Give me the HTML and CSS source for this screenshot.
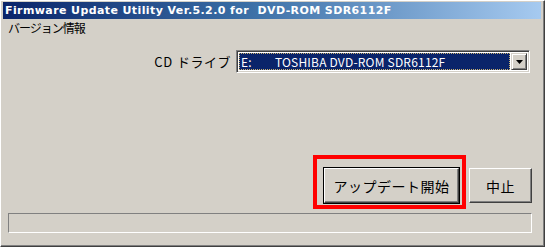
FILE: index.html
```html
<!DOCTYPE html>
<html lang="ja">
<head>
<meta charset="utf-8">
<link rel="stylesheet" href="styles.css">
</head>
<body>
<div class="window">
  <div class="titlebar">Firmware Update Utility Ver.5.2.0 for&nbsp; DVD-ROM SDR6112F</div>
  <div class="menubar"><span class="menu-item">バージョン情報</span></div>
  <div class="content">
    <div class="drive-row">
      <span class="drive-label">CD ドライブ</span>
      <div class="combo">
        <div class="combo-value"><span class="combo-text">E:        TOSHIBA DVD-ROM SDR6112F</span></div>
        <div class="combo-button">
          <svg width="7" height="4" viewBox="0 0 7 4"><path d="M0 0H7L3.5 4Z" fill="#000"/></svg>
        </div>
      </div>
    </div>
    <div class="button-row">
      <div class="btn btn-default">アップデート開始</div>
      <div class="btn btn-cancel">中止</div>
      <div class="highlight"></div>
    </div>
    <div class="progress"></div>
  </div>
</div>
</body>
</html>
```

FILE: styles.css
```css
html, body {
  margin: 0;
  padding: 0;
  background: #d4d0c8;
}
.window {
  position: relative;
  width: 545px;
  height: 247px;
  box-sizing: border-box;
  background: #d4d0c8;
  border-top: 1px solid #ffffff;
  border-left: 1px solid #ffffff;
  border-right: 1px solid #404040;
  border-bottom: 1px solid #404040;
  box-shadow: inset -1px -1px 0 #808080;
  padding: 1px 3px 2px 2px;
  font-family: "Noto Sans CJK JP", "DejaVu Sans", sans-serif;
  color: #000;
}
.titlebar {
  height: 17px;
  background: linear-gradient(to right, #0a246a 0%, #3a6ea5 45%, #a6caf0 100%);
  color: #fff;
  font-family: "DejaVu Sans", sans-serif;
  font-weight: bold;
  font-size: 11px;
  line-height: 17px;
  padding-left: 2px;
  white-space: nowrap;
  letter-spacing: 0.4px;
}
.menubar {
  height: 18px;
  display: flex;
  align-items: center;
  padding-left: 5px;
  font-size: 12px;
  line-height: 18px;
}
.menu-item {
  letter-spacing: -1px;
}
.content {
  padding: 13px 9px 0 5px;
}
.drive-row {
  display: flex;
  justify-content: flex-end;
  align-items: center;
  gap: 5px;
  padding-right: 2px;
}
.drive-label {
  font-size: 13px;
  letter-spacing: 0.5px;
  word-spacing: 1px;
}
.combo {
  width: 294px;
  height: 23px;
  box-sizing: border-box;
  border-top: 1px solid #808080;
  border-left: 1px solid #808080;
  border-right: 1px solid #ffffff;
  border-bottom: 1px solid #ffffff;
  box-shadow: inset 1px 1px 0 #404040, inset -1px -1px 0 #d4d0c8;
  background: #fff;
  padding: 2px;
  display: flex;
  gap: 1px;
}
.combo-value {
  flex: 1;
  background: #0a246a;
  outline: 1px dotted #c8b070;
  outline-offset: -1px;
  color: #fff;
  font-size: 12px;
  line-height: 17px;
  padding-left: 2px;
  white-space: pre;
  overflow: hidden;
}
.combo-text {
  letter-spacing: 0.2px;
}
.combo-button {
  width: 16px;
  box-sizing: border-box;
  background: #d4d0c8;
  border-top: 1px solid #d4d0c8;
  border-left: 1px solid #d4d0c8;
  border-right: 1px solid #404040;
  border-bottom: 1px solid #404040;
  box-shadow: inset 1px 1px 0 #fff, inset -1px -1px 0 #808080;
  display: flex;
  align-items: center;
  justify-content: center;
}
.button-row {
  position: relative;
  margin-top: 95px;
  display: flex;
  justify-content: flex-end;
  gap: 10px;
}
.btn {
  height: 35px;
  box-sizing: border-box;
  display: flex;
  align-items: center;
  justify-content: center;
  font-size: 14px;
  background: #d4d0c8;
  border-top: 1px solid #ffffff;
  border-left: 1px solid #ffffff;
  border-right: 1px solid #404040;
  border-bottom: 1px solid #404040;
  box-shadow: inset -1px -1px 0 #808080;
}
.btn-default {
  width: 135px;
  outline: 1px solid #000;
  letter-spacing: 0.5px;
}
.btn-cancel {
  width: 63px;
  letter-spacing: 0.5px;
}
.highlight {
  position: absolute;
  left: 305px;
  top: -13px;
  width: 153px;
  height: 54px;
  box-sizing: border-box;
  border: 4px solid #ff0000;
  pointer-events: none;
}
.progress {
  margin-top: 10px;
  height: 20px;
  box-sizing: border-box;
  border-top: 1px solid #808080;
  border-left: 1px solid #808080;
  border-right: 1px solid #ffffff;
  border-bottom: 1px solid #ffffff;
}
```
